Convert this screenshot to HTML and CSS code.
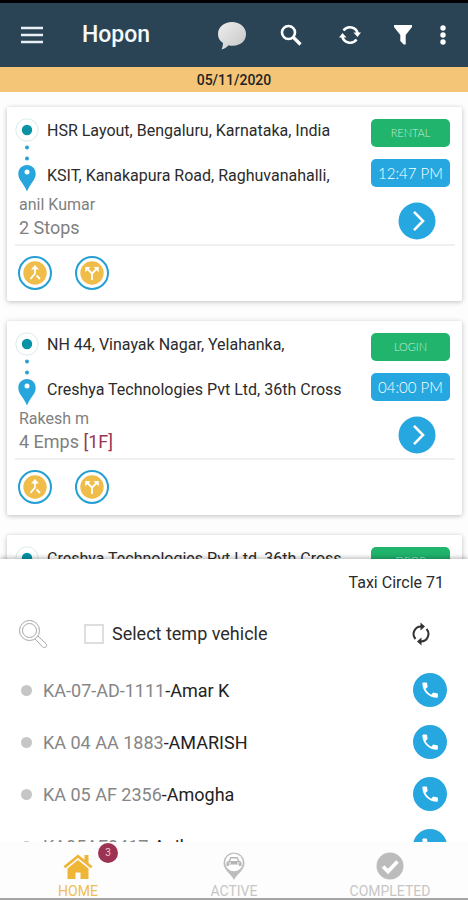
FILE: index.html
```html
<!DOCTYPE html>
<html lang="en">
<head>
<meta charset="utf-8">
<meta name="viewport" content="width=device-width, initial-scale=1">
<title>Hopon</title>
<link rel="stylesheet" href="styles.css">
</head>
<body>
<svg class="sprite" aria-hidden="true">
  <symbol id="route" viewBox="0 0 24 76">
    <circle cx="12" cy="12" r="11.2" fill="#fff" stroke="#d9ebeb"/>
    <circle cx="12" cy="12" r="5.2" fill="#0792a6"/>
    <circle cx="12" cy="29.500" r="2" fill="#27a0d0"/>
    <circle cx="12" cy="40.500" r="2" fill="#27a0d0"/>
    <path d="M12 47c-5 0-8.700 3.800-8.700 8.700C3.300 62 8.500 65 12 73.500 15.500 65 20.700 62 20.700 55.700 20.700 50.800 17 47 12 47z" fill="#27a6de"/>
    <circle cx="12" cy="54" r="2.500" fill="#fff"/>
  </symbol>
  <symbol id="merge" viewBox="0 0 34 34">
    <circle cx="17" cy="17" r="16" fill="#fff" stroke="#259fd3" stroke-width="2"/>
    <circle cx="17" cy="17" r="11.700" fill="#f0bd4b"/>
    <path d="M17 12v5.500l-4.500 5.300M18.500 19.500l3.500 3.500" fill="none" stroke="#fff" stroke-width="1.800"/>
    <path d="M17 9l4 4.500h-8z" fill="#fff"/>
  </symbol>
  <symbol id="split" viewBox="0 0 34 34">
    <circle cx="17" cy="17" r="16" fill="#fff" stroke="#259fd3" stroke-width="2"/>
    <circle cx="17" cy="17" r="11.700" fill="#f0bd4b"/>
    <path d="M12.500 13l4.500 4.500V24M17 17.500l4.500-4.500" fill="none" stroke="#fff" stroke-width="1.800"/>
    <path d="M10.300 11h5.200l-5.200 5.200zM23.700 11h-5.200l5.200 5.200z" fill="#fff"/>
  </symbol>
  <symbol id="next" viewBox="0 0 38 38">
    <circle cx="19" cy="19" r="18.500" fill="#27a7e0"/>
    <path d="M16 9.800l9 9.200-9 9.200" fill="none" stroke="#fff" stroke-width="2.600"/>
  </symbol>
  <symbol id="phone" viewBox="0 0 34 34">
    <circle cx="17" cy="17" r="17" fill="#27a7e0"/>
    <path transform="translate(6.800 6.800) scale(.86)" d="M6.620 10.790c1.440 2.830 3.760 5.140 6.590 6.590l2.200-2.200c.27-.27.67-.36 1.020-.24 1.120.37 2.330.57 3.570.57.55 0 1 .45 1 1V20c0 .55-.45 1-1 1-9.390 0-17-7.610-17-17 0-.55.45-1 1-1h3.500c.55 0 1 .45 1 1 0 1.250.2 2.450.57 3.570.11.350.03.740-.25 1.020z" fill="#fff"/>
  </symbol>
</svg>

<header class="appbar">
  <button class="icon-btn menu" aria-label="Menu">
    <svg width="22" height="18" viewBox="0 0 22 18"><path d="M0 2h22M0 9h22M0 16h22" stroke="#e8f0f5" stroke-width="2.600"/></svg>
  </button>
  <h1 class="title">Hopon</h1>
  <nav class="actions" aria-label="Actions">
    <button class="icon-btn" aria-label="Messages">
      <svg width="30" height="30" viewBox="0 0 30 30"><defs><linearGradient id="bubble" x1="0" y1="0" x2="1" y2="1"><stop offset="0" stop-color="#eee"/><stop offset="1" stop-color="#c6c6c6"/></linearGradient></defs><path d="M15 2C7 2 1 7 1 14c0 4 1.700 7 5 9 0 2-.5 4-1.500 6.500C8 28.500 10 27 11.500 25.200 21.500 27.500 29 22 29 14 29 7 23 2 15 2z" fill="url(#bubble)"/></svg>
    </button>
    <button class="icon-btn" aria-label="Search">
      <svg width="22" height="22" viewBox="0 0 22 22" fill="none" stroke="#fff"><circle cx="8.500" cy="8.500" r="6.500" stroke-width="2.600"/><path d="M13 13l7.500 7.500" stroke-width="3.200"/></svg>
    </button>
    <button class="icon-btn" aria-label="Sync">
      <svg width="22" height="20" viewBox="0 0 22 20"><path d="M4.500 5.500A8 8 0 0 1 18.800 9M17.500 14.500A8 8 0 0 1 3.200 11" fill="none" stroke="#fff" stroke-width="2.500"/><path d="M14.500 7.500H22L18.500 12zM7.500 12.500H0L3.500 8z" fill="#fff"/></svg>
    </button>
    <button class="icon-btn" aria-label="Filter">
      <svg width="18" height="20" viewBox="0 0 18 20"><path d="M0 0h18v2l-6.300 8v9.500h-2L6.300 16v-6L0 2z" fill="#fff"/></svg>
    </button>
    <button class="icon-btn" aria-label="More options">
      <svg width="6" height="20" viewBox="0 0 6 20" fill="#fff"><circle cx="3" cy="3" r="2.700"/><circle cx="3" cy="10" r="2.700"/><circle cx="3" cy="17" r="2.700"/></svg>
    </button>
  </nav>
</header>

<div class="date">05/11/2020</div>

<main class="trips">
  <article class="card">
    <div class="card-body">
      <div class="info">
        <div class="route">
          <svg class="route-mark" aria-hidden="true"><use href="#route"/></svg>
          <div class="stops"><p>HSR Layout, Bengaluru, Karnataka, India</p><p>KSIT, Kanakapura Road, Raghuvanahalli,</p></div>
        </div>
        <p class="driver">anil Kumar</p>
        <p class="count">2 Stops</p>
      </div>
      <div class="side">
        <span class="tag">RENTAL</span>
        <span class="tag time">12:47 PM</span>
        <button class="icon-btn next" aria-label="Open trip"><svg width="38" height="38"><use href="#next"/></svg></button>
      </div>
    </div>
    <div class="card-foot">
      <button class="icon-btn" aria-label="Merge trip"><svg width="34" height="34"><use href="#merge"/></svg></button>
      <button class="icon-btn" aria-label="Split trip"><svg width="34" height="34"><use href="#split"/></svg></button>
    </div>
  </article>

  <article class="card">
    <div class="card-body">
      <div class="info">
        <div class="route">
          <svg class="route-mark" aria-hidden="true"><use href="#route"/></svg>
          <div class="stops"><p>NH 44, Vinayak Nagar, Yelahanka,</p><p>Creshya Technologies Pvt Ltd, 36th Cross</p></div>
        </div>
        <p class="driver">Rakesh m</p>
        <p class="count">4 Emps <span class="flag">[1F]</span></p>
      </div>
      <div class="side">
        <span class="tag">LOGIN</span>
        <span class="tag time">04:00 PM</span>
        <button class="icon-btn next" aria-label="Open trip"><svg width="38" height="38"><use href="#next"/></svg></button>
      </div>
    </div>
    <div class="card-foot">
      <button class="icon-btn" aria-label="Merge trip"><svg width="34" height="34"><use href="#merge"/></svg></button>
      <button class="icon-btn" aria-label="Split trip"><svg width="34" height="34"><use href="#split"/></svg></button>
    </div>
  </article>

  <article class="card">
    <div class="card-body">
      <div class="info">
        <div class="route">
          <svg class="route-mark" aria-hidden="true"><use href="#route"/></svg>
          <div class="stops"><p>Creshya Technologies Pvt Ltd, 36th Cross</p></div>
        </div>
      </div>
      <div class="side">
        <span class="tag">DROP</span>
      </div>
    </div>
  </article>
</main>

<section class="sheet" aria-label="Assign vehicle">
  <p class="sheet-title">Taxi Circle 71</p>
  <div class="tools">
    <button class="icon-btn" aria-label="Search vehicles">
      <svg width="30" height="30" viewBox="0 0 30 30" fill="none" stroke="#a5a5a5"><circle cx="11.500" cy="11.500" r="10"/><circle cx="11.500" cy="11.500" r="7"/><path d="M17 20l8 8.300c2 1.200 4.500-1.300 3.300-3.300L20 17"/></svg>
    </button>
    <label class="temp"><input type="checkbox">Select temp vehicle</label>
    <button class="icon-btn" aria-label="Refresh vehicles">
      <svg width="18" height="24" viewBox="0 0 18 24"><path d="M10 4.500H9A7.500 7.500 0 0 0 3.500 17M8 19.500h1A7.500 7.500 0 0 0 14.500 7" fill="none" stroke="#333" stroke-width="2"/><path d="M8.500.500l4.500 4-4.500 4zM9.500 15.500l-4.500 4 4.500 4z" fill="#333"/></svg>
    </button>
  </div>
  <ul class="vehicles">
    <li><span class="dot"></span><span class="plate">KA-07-AD-1111<b>-Amar K</b></span><button class="icon-btn" aria-label="Call Amar K"><svg width="34" height="34"><use href="#phone"/></svg></button></li>
    <li><span class="dot"></span><span class="plate">KA 04 AA 1883<b>-AMARISH</b></span><button class="icon-btn" aria-label="Call AMARISH"><svg width="34" height="34"><use href="#phone"/></svg></button></li>
    <li><span class="dot"></span><span class="plate">KA 05 AF 2356<b>-Amogha</b></span><button class="icon-btn" aria-label="Call Amogha"><svg width="34" height="34"><use href="#phone"/></svg></button></li>
    <li><span class="dot"></span><span class="plate">KA05AF2417<b>-Anil</b></span><button class="icon-btn" aria-label="Call Anil"><svg width="34" height="34"><use href="#phone"/></svg></button></li>
  </ul>
</section>

<nav class="tabs" aria-label="Main">
  <a class="tab current" href="#home">
    <svg width="30" height="28" viewBox="0 0 30 28" fill="#efb536"><path d="M15 2.500L.500 14.300l1.800 2L15 6l12.700 10.300 1.800-2L25.500 11V3h-4v4.700z"/><path d="M15 8L4.500 16.500V27h8v-6.500h5V27h8V16.500z"/></svg>
    <span>HOME</span><span class="badge">3</span>
  </a>
  <a class="tab" href="#active">
    <svg width="24" height="28" viewBox="0 0 24 28"><path d="M12 28C9 22 1.500 18 1.500 11a10.500 10.500 0 0 1 21 0C22.500 18 15 22 12 28z" fill="#bdbdbd"/><circle cx="12" cy="10.500" r="8.800" fill="#fff"/><path d="M4.500 14v-4l2-1 2-4h7l2 4 2 1v4h-2.500v-1.500h-10V14z" fill="#b5b5b5"/><path d="M8 9l1.200-2.500h5.600L16 9z" fill="#fff"/><path d="M6.500 11h2.500M15 11h2.500" stroke="#fff" stroke-width="1.200"/></svg>
    <span>ACTIVE</span>
  </a>
  <a class="tab" href="#completed">
    <svg width="28" height="28" viewBox="0 0 28 28"><circle cx="14" cy="14" r="13.500" fill="#bcbcbc"/><path d="M7 14.500l5 5 9.500-10" fill="none" stroke="#fff" stroke-width="3.800"/></svg>
    <span>COMPLETED</span>
  </a>
</nav>
</body>
</html>
```
FILE: styles.css
```css
* {
  box-sizing: border-box;
}

body {
  display: flex;
  flex-direction: column;
  height: 100vh;
  margin: 0;
  overflow: hidden;
  background: #fdfdfd;
  color: #2b2b2b;
  font: 16px/24px Roboto, sans-serif;
}

h1, p, ul {
  margin: 0;
  padding: 0;
}

svg {
  display: block;
}

.sprite {
  position: absolute;
  width: 0;
  height: 0;
}

.icon-btn {
  flex: none;
  padding: 0;
  border: 0;
  background: none;
  cursor: pointer;
}

.appbar {
  display: flex;
  flex: none;
  align-items: center;
  height: 67px;
  padding: 0 22px 0 21px;
  border-top: 3px solid #000;
  background: #2a4455;
}

.title {
  margin-left: 39px;
  color: #f4f9fc;
  font-size: 23px;
  font-weight: 500;
  line-height: 32px;
}

.actions {
  display: flex;
  align-items: center;
  gap: 33px;
  margin-left: auto;
}

.actions .icon-btn:nth-child(2) {
  margin-right: 4px;
}

.actions .icon-btn:last-child {
  margin-left: -5px;
}

.date {
  flex: none;
  height: 25px;
  background: #f4c577;
  color: #222;
  font-size: 14px;
  font-weight: 500;
  line-height: 26px;
  text-align: center;
}

.trips {
  display: flex;
  flex: 1;
  flex-direction: column;
  gap: 20px;
  min-height: 0;
  padding: 15px 6px 0 7px;
  overflow: hidden;
}

.card {
  flex: none;
  border-radius: 2px;
  background: #fff;
  box-shadow: 0 1px 5px rgba(0, 0, 0, 0.25);
}

.card-body {
  display: flex;
  justify-content: space-between;
  min-height: 139px;
  margin: 0 7px 0 8px;
  border-bottom: 2px solid #f0f0f0;
}

.info {
  flex: 1;
  min-width: 0;
  padding-top: 11px;
}

.route {
  display: flex;
  gap: 8px;
}

.route-mark {
  flex: none;
  width: 24px;
  height: 76px;
}

.stops {
  display: grid;
  gap: 21px;
  align-content: start;
  padding-top: 1px;
  white-space: nowrap;
}

.driver,
.count {
  padding-left: 4px;
  color: #808080;
}

.driver {
  line-height: 22px;
}

.count {
  font-size: 18px;
}

.flag {
  color: #9a3454;
}

.side {
  display: flex;
  flex: none;
  flex-direction: column;
  gap: 12px;
  width: 79px;
  margin-right: 5px;
  padding-top: 12px;
}

.tag {
  height: 28px;
  border-radius: 5px;
  background: #20b46c;
  color: #c4ecd8;
  font: 300 11px/28px Lato, sans-serif;
  text-align: center;
}

.time {
  background: #27a7e0;
  color: #fff;
  font-size: 15px;
}

.next {
  align-self: center;
  margin: 3px 0 0 12px;
}

.card-foot {
  display: flex;
  gap: 23px;
  padding: 10px 11px 11px;
}

.sheet {
  position: relative;
  flex: none;
  background: #fff;
  box-shadow: 0 -1px 5px rgba(0, 0, 0, 0.3);
}

.sheet-title {
  padding: 12px 24px 0;
  text-align: right;
}

.tools {
  display: flex;
  align-items: center;
  height: 69px;
  padding: 8px 38px 0 18px;
}

.temp {
  display: flex;
  flex: 1;
  align-items: center;
  gap: 8px;
  margin-left: 36px;
  font-size: 18px;
}

.temp input {
  appearance: none;
  width: 20px;
  height: 20px;
  margin: 0;
  border: 2px solid #dedede;
  background: #fff;
}

.vehicles {
  max-height: 178px;
  overflow: hidden;
  list-style: none;
}

.vehicles li {
  display: flex;
  align-items: center;
  height: 52px;
  padding: 0 21px;
}

.dot {
  width: 11px;
  height: 11px;
  border-radius: 50%;
  background: #c6c6c6;
}

.plate {
  flex: 1;
  margin-left: 11px;
  padding-top: 2px;
  color: #868686;
  font-size: 18px;
}

.plate b {
  color: #222;
  font-weight: 400;
}

.tabs {
  position: relative;
  display: grid;
  flex: none;
  grid-template-columns: repeat(3, 1fr);
  height: 58px;
  border-bottom: 2px solid #a5a5a5;
  background: #fdfdfd;
}

.tab {
  position: relative;
  display: flex;
  flex-direction: column;
  align-items: center;
  gap: 3px;
  padding-top: 10px;
  color: #c6c6c6;
  font-size: 14px;
  line-height: 16px;
  text-decoration: none;
}

.current {
  color: #efbd50;
}

.badge {
  position: absolute;
  top: 1px;
  left: calc(50% + 20px);
  width: 20px;
  height: 20px;
  border-radius: 50%;
  background: #9d3352;
  color: #f0cbd6;
  font-size: 10px;
  line-height: 20px;
  text-align: center;
}
```
